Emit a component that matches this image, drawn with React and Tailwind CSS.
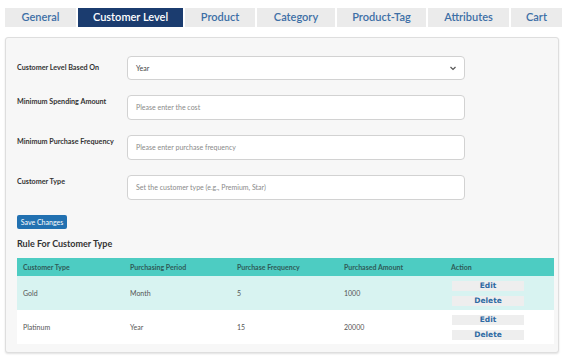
const TABS = [
  { name: 'General', w: 'w-[71px]' },
  { name: 'Customer Level', w: 'w-[105px]', active: true },
  { name: 'Product', w: 'w-[70px]' },
  { name: 'Category', w: 'w-[78px]' },
  { name: 'Product-Tag', w: 'w-[89px]' },
  { name: 'Attributes', w: 'w-[81px]' },
  { name: 'Cart', w: 'w-[51px]' },
];

const FIELDS = [
  { label: 'Customer Level Based On', select: true, value: 'Year', h: 'h-[24px]', pt: 'pt-[7px]' },
  { label: 'Minimum Spending Amount', placeholder: 'Please enter the cost', h: 'h-[25px]', pt: 'pt-[2px]' },
  { label: 'Minimum Purchase Frequency', placeholder: 'Please enter purchase frequency', h: 'h-[25px]', pt: 'pt-[2px]' },
  { label: 'Customer Type', placeholder: 'Set the customer type (e.g., Premium, Star)', h: 'h-[25px]', pt: 'pt-[2px]' },
];

const ROWS = [
  { type: 'Gold', period: 'Month', freq: '5', amount: '1000', bg: 'bg-[#d8f3f1]' },
  { type: 'Platinum', period: 'Year', freq: '15', amount: '20000', bg: 'bg-white' },
];

function ActionButton({ children }) {
  return (
    <button
      className="w-[72px] h-[10px] flex items-center justify-center bg-[#eeeeee] text-[#2e6aa3] text-[7.5px] font-bold leading-none"
      style={{ fontFamily: '"DejaVu Sans", sans-serif' }}
    >
      {children}
    </button>
  );
}

export default function App() {
  return (
    <div
      className="w-[564px] h-[356px] bg-white overflow-hidden"
      style={{ fontFamily: 'Lato, "Open Sans", sans-serif' }}
    >
      {/* Tabs */}
      <div className="flex gap-[2px] pl-[5px] pt-[8px]">
        {TABS.map((t) => (
          <div
            key={t.name}
            className={`${t.w} h-[19px] flex items-center justify-center text-[11px] font-semibold ${
              t.active ? 'bg-[#1b3c6f] text-white' : 'bg-[#ebebeb] text-[#3d6fa6]'
            }`}
          >
            {t.name}
          </div>
        ))}
      </div>

      {/* Panel */}
      <div className="mx-[5px] mt-[10px] h-[316px] rounded-[3px] border border-[#dedede] bg-[#f7f7f7] shadow-[0_1px_2px_rgba(0,0,0,0.12)] pl-[11px] pr-[8px] pt-[18px]">
        <div className="flex flex-col gap-[15px]">
          {FIELDS.map((f) => (
            <div key={f.label} className="flex">
              <div className={`w-[110px] ${f.pt} whitespace-nowrap text-[7.2px] leading-[10px] font-bold text-[#333]`}>
                {f.label}
              </div>
              <div
                className={`w-[338px] ${f.h} rounded-[4px] border border-[#d2d2d2] bg-white flex items-center justify-between px-[8px] text-[7px]`}
              >
                {f.select ? (
                  <>
                    <span className="text-[#444]">{f.value}</span>
                    <svg width="8" height="8" viewBox="0 0 8 8" className="mr-[-1px]">
                      <path d="M1.5 3 L4 5.5 L6.5 3" fill="none" stroke="#555" strokeWidth="1.2" />
                    </svg>
                  </>
                ) : (
                  <span className="text-[#8a8a8a]">{f.placeholder}</span>
                )}
              </div>
            </div>
          ))}
        </div>

        <button className="mt-[15px] w-[50px] h-[14px] rounded-[2px] bg-[#2271b1] text-white text-[7px] flex items-center justify-center">
          Save Changes
        </button>

        <div className="mt-[8px] text-[9px] font-bold text-[#333] leading-[14px]">
          Rule For Customer Type
        </div>

        {/* Table */}
        <div className="mt-[7px] w-[537px] text-[7px] text-[#555]">
          <div className="h-[18px] bg-[#4dccc2] flex items-center text-[#2f5b58] font-bold">
            <div className="w-[107px] pl-[6px]">Customer Type</div>
            <div className="w-[107px] pl-[6px]">Purchasing Period</div>
            <div className="w-[107px] pl-[6px]">Purchase Frequency</div>
            <div className="w-[107px] pl-[6px]">Purchased Amount</div>
            <div className="flex-1 pl-[6px]">Action</div>
          </div>
          {ROWS.map((r) => (
            <div key={r.type} className={`h-[34px] ${r.bg} flex items-center`}>
              <div className="w-[107px] pl-[6px]">{r.type}</div>
              <div className="w-[107px] pl-[6px]">{r.period}</div>
              <div className="w-[107px] pl-[6px]">{r.freq}</div>
              <div className="w-[107px] pl-[6px]">{r.amount}</div>
              <div className="flex-1 pl-[7px] flex flex-col gap-[5px]">
                <ActionButton>Edit</ActionButton>
                <ActionButton>Delete</ActionButton>
              </div>
            </div>
          ))}
        </div>
      </div>
    </div>
  );
}
